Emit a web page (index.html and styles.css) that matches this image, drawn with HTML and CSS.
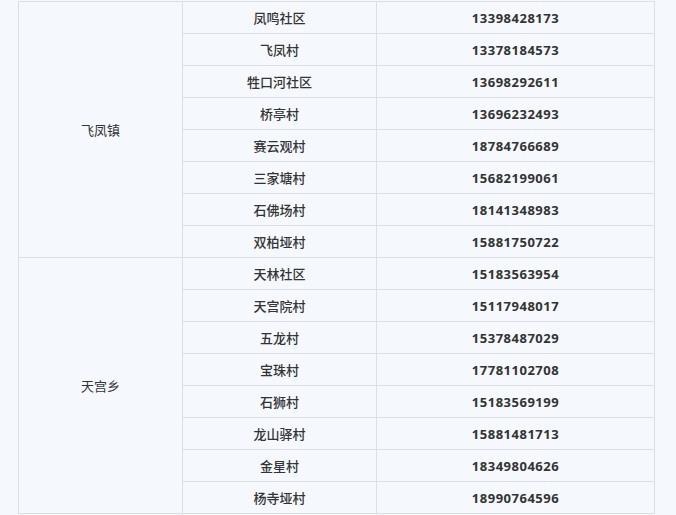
FILE: index.html
```html
<!DOCTYPE html>
<html lang="zh">
<head>
<meta charset="utf-8">
<link rel="stylesheet" href="styles.css">
</head>
<body>
<table class="tbl">
  <colgroup><col class="c1"><col class="c2"><col class="c3"></colgroup>
  <tbody>
    <tr><td class="town" rowspan="8">飞凤镇</td><td class="name">凤鸣社区</td><td class="tel">13398428173</td></tr>
    <tr><td class="name">飞凤村</td><td class="tel">13378184573</td></tr>
    <tr><td class="name">牲口河社区</td><td class="tel">13698292611</td></tr>
    <tr><td class="name">桥亭村</td><td class="tel">13696232493</td></tr>
    <tr><td class="name">赛云观村</td><td class="tel">18784766689</td></tr>
    <tr><td class="name">三家塘村</td><td class="tel">15682199061</td></tr>
    <tr><td class="name">石佛场村</td><td class="tel">18141348983</td></tr>
    <tr><td class="name">双柏垭村</td><td class="tel">15881750722</td></tr>
    <tr><td class="town" rowspan="8">天宫乡</td><td class="name">天林社区</td><td class="tel">15183563954</td></tr>
    <tr><td class="name">天宫院村</td><td class="tel">15117948017</td></tr>
    <tr><td class="name">五龙村</td><td class="tel">15378487029</td></tr>
    <tr><td class="name">宝珠村</td><td class="tel">17781102708</td></tr>
    <tr><td class="name">石狮村</td><td class="tel">15183569199</td></tr>
    <tr><td class="name">龙山驿村</td><td class="tel">15881481713</td></tr>
    <tr><td class="name">金星村</td><td class="tel">18349804626</td></tr>
    <tr><td class="name">杨寺垭村</td><td class="tel">18990764596</td></tr>
  </tbody>
</table>
</body>
</html>
```

FILE: styles.css
```css
html, body {
  margin: 0;
  padding: 0;
  background: #f5f9fd;
}
body {
  padding: 1px 0 0 18px;
  font-family: "Open Sans", "Noto Sans CJK SC", sans-serif;
  color: #333;
}
.tbl {
  border-collapse: collapse;
  table-layout: fixed;
  width: 636px;
}
.c1 { width: 164px; }
.c2 { width: 194px; }
.c3 { width: 278px; }
.tbl td {
  border: 1px solid #dcdfe4;
  height: 30px;
  padding: 1px 0 0;
  text-align: center;
  vertical-align: middle;
  font-size: 13px;
  line-height: 16px;
}
.town {
  font-weight: 400;
}
.name {
  font-weight: 500;
}
.tel {
  font-weight: 700;
  letter-spacing: 0.5px;
}
```
